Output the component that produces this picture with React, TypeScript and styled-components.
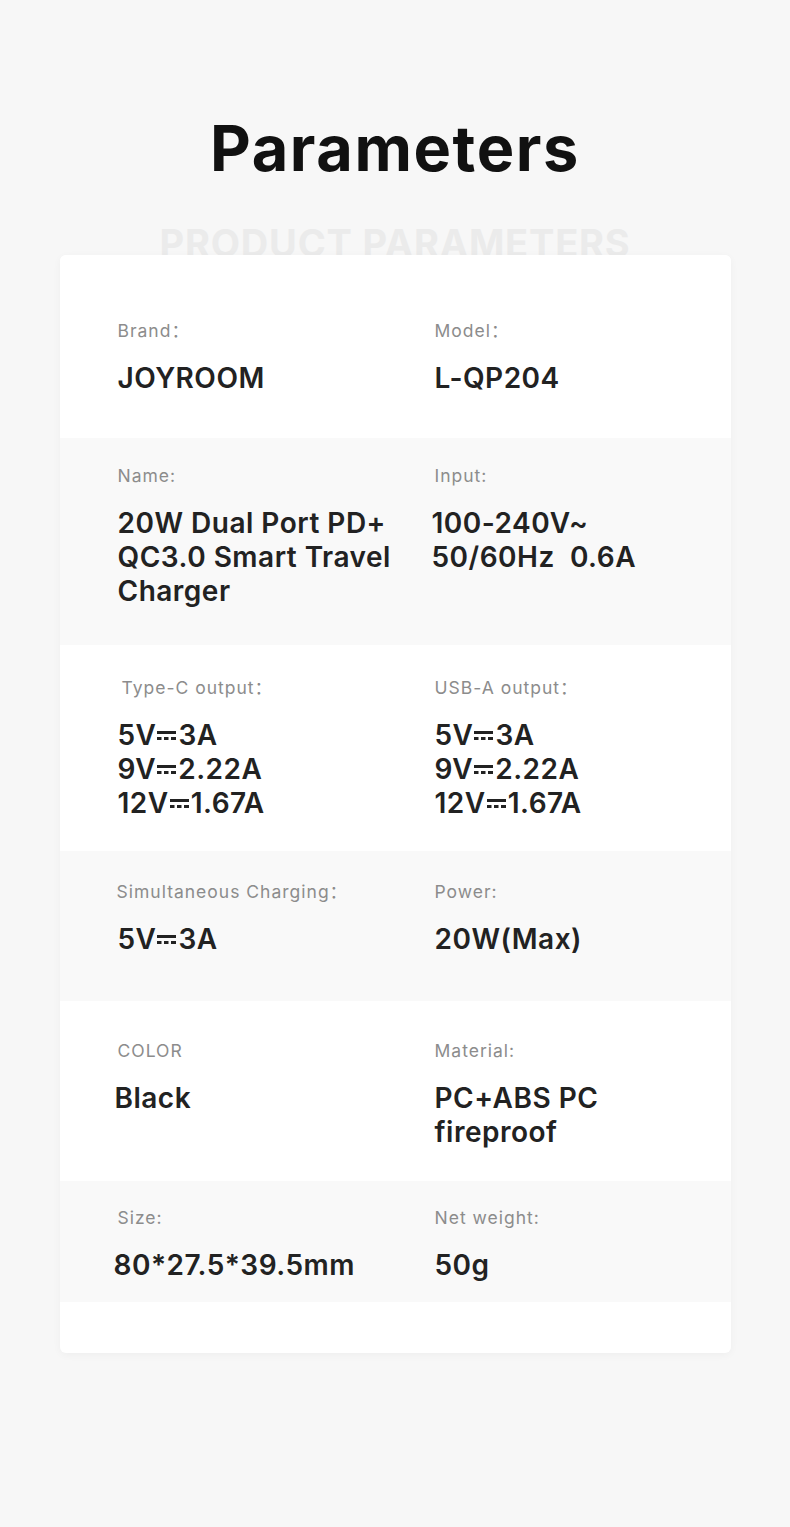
import React from "react";
import styled, { createGlobalStyle } from "styled-components";

const Global = createGlobalStyle`
  html, body { margin: 0; padding: 0; background: #f7f7f7; }
  body { font-family: Inter, "Noto Sans CJK SC", sans-serif; -webkit-font-smoothing: antialiased; }
`;

const Page = styled.div`
  width: 790px;
  min-height: 1527px;
  background: #f7f7f7;
  display: flex;
  flex-direction: column;
  align-items: center;
`;

const Title = styled.h1`
  margin: 112px 0 0;
  font-family: Inter, sans-serif;
  font-weight: 700;
  font-size: 63px;
  line-height: 72px;
  letter-spacing: 1.6px;
  color: #111;
`;

const SubtitleClip = styled.div`
  margin-top: 36px;
  height: 35px;
  overflow: hidden;
  display: flex;
  justify-content: center;
  width: 100%;
`;

const Subtitle = styled.div`
  font-family: Inter, sans-serif;
  font-weight: 700;
  font-size: 38px;
  line-height: 46px;
  color: #ebebeb;
  letter-spacing: 0.8px;
`;

const Card = styled.div`
  width: 671px;
  background: #fff;
  border-radius: 6px;
  box-shadow: 0 2px 8px rgba(0, 0, 0, 0.04);
  padding-bottom: 51px;
  overflow: hidden;
`;

const Row = styled.div<{ $alt?: boolean; $pt: number; $pb: number }>`
  display: grid;
  grid-template-columns: 317px 1fr;
  padding: ${(p) => p.$pt}px 20px ${(p) => p.$pb}px 58px;
  background: ${(p) => (p.$alt ? "#f9f9f9" : "#ffffff")};
`;

const Cell = styled.div`
  display: flex;
  flex-direction: column;
`;

const Label = styled.div<{ $shift?: number }>`
  font-family: Inter, "Noto Sans CJK SC", sans-serif;
  font-size: 17.5px;
  line-height: 20px;
  font-weight: 400;
  color: #8c8c8c;
  letter-spacing: 1px;
  white-space: nowrap;
  margin-left: ${(p) => p.$shift ?? 0}px;
  margin-bottom: 20px;
`;

const Value = styled.div<{ $shift?: number }>`
  font-family: Inter, sans-serif;
  font-size: 28px;
  line-height: 34px;
  font-weight: 600;
  color: #222;
  letter-spacing: 0.5px;
  white-space: nowrap;
  margin-left: ${(p) => p.$shift ?? 0}px;
`;

const DcIcon = styled.svg`
  display: inline-block;
  width: 19px;
  height: 12px;
  margin: 0 2px 0 1px;
  vertical-align: 3px;
`;

const Dc = () => (
  <DcIcon viewBox="0 0 19 12" aria-hidden="true">
    <rect x="0" y="1" width="19" height="3" fill="#222" />
    <rect x="0" y="7" width="4.5" height="3" fill="#222" />
    <rect x="7" y="7" width="4.5" height="3" fill="#222" />
    <rect x="14" y="7" width="5" height="3" fill="#222" />
  </DcIcon>
);

const Volt = ({ v, a }: { v: string; a: string }) => (
  <>
    {v}
    <Dc />
    {a}
  </>
);

export default function App() {
  return (
    <Page>
      <Global />
      <Title>Parameters</Title>
      <SubtitleClip>
        <Subtitle>PRODUCT PARAMETERS</Subtitle>
      </SubtitleClip>
      <Card>
        <Row $pt={66} $pb={43}>
          <Cell>
            <Label>Brand：</Label>
            <Value>JOYROOM</Value>
          </Cell>
          <Cell>
            <Label>Model：</Label>
            <Value>L-QP204</Value>
          </Cell>
        </Row>
        <Row $alt $pt={28} $pb={37}>
          <Cell>
            <Label>Name:</Label>
            <Value>20W Dual Port PD+</Value>
            <Value>QC3.0 Smart Travel</Value>
            <Value>Charger</Value>
          </Cell>
          <Cell>
            <Label>Input:</Label>
            <Value $shift={-3}>100-240V~</Value>
            <Value $shift={-3}>50/60Hz&nbsp; 0.6A</Value>
          </Cell>
        </Row>
        <Row $pt={33} $pb={31}>
          <Cell>
            <Label $shift={4}>Type-C output：</Label>
            <Value>
              <Volt v="5V" a="3A" />
            </Value>
            <Value>
              <Volt v="9V" a="2.22A" />
            </Value>
            <Value>
              <Volt v="12V" a="1.67A" />
            </Value>
          </Cell>
          <Cell>
            <Label>USB-A output：</Label>
            <Value>
              <Volt v="5V" a="3A" />
            </Value>
            <Value>
              <Volt v="9V" a="2.22A" />
            </Value>
            <Value>
              <Volt v="12V" a="1.67A" />
            </Value>
          </Cell>
        </Row>
        <Row $alt $pt={31} $pb={45}>
          <Cell>
            <Label $shift={-1}>Simultaneous Charging：</Label>
            <Value>
              <Volt v="5V" a="3A" />
            </Value>
          </Cell>
          <Cell>
            <Label>Power:</Label>
            <Value>20W(Max)</Value>
          </Cell>
        </Row>
        <Row $pt={40} $pb={32}>
          <Cell>
            <Label>COLOR</Label>
            <Value $shift={-3}>Black</Value>
          </Cell>
          <Cell>
            <Label>Material:</Label>
            <Value>PC+ABS PC</Value>
            <Value>fireproof</Value>
          </Cell>
        </Row>
        <Row $alt $pt={27} $pb={20}>
          <Cell>
            <Label>Size:</Label>
            <Value $shift={-4}>80*27.5*39.5mm</Value>
          </Cell>
          <Cell>
            <Label>Net weight:</Label>
            <Value>50g</Value>
          </Cell>
        </Row>
      </Card>
    </Page>
  );
}
